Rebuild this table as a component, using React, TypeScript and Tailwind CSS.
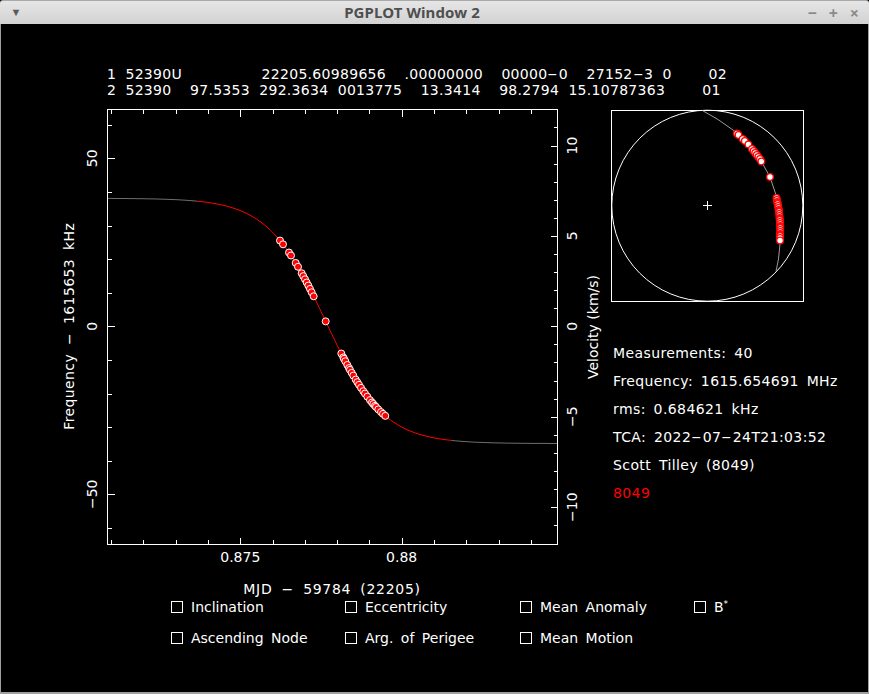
import React from "react"

const Y0 = 327.3
const fy = (v: number) => Y0 - 3.36 * v
const vy = (k: number) => Y0 - 18.08 * k
const tx = (k: number) => 240.3 + (k - 875) * 32.28
const curveV = (x: number) => 1.6 - 36.5 * Math.tanh((x - 325.5) / 58)

const range = (a: number, b: number, step = 1) => {
  const out: number[] = []
  for (let i = a; i <= b; i += step) out.push(i)
  return out
}

const pointXs = [
  280, 283, 289, 291, 295.7, 298, 301.7, 303.3, 305, 306.7, 308.3, 310, 311.7, 313.7, 325.7, 341.3, 343.3, 344,
  345.3, 347.3, 349, 350, 351.7, 353.3, 355.7, 357.3, 359, 361, 363.3, 365, 367.3, 370, 372, 373.3, 375, 376, 378.3,
  381, 383, 385.3,
]

const track: [number, number][] = [
  [702.7, 111.7], [718, 120.5], [734, 131.7], [748, 145], [760, 160], [770, 178], [776, 196], [779, 212],
  [780.3, 227], [780, 245], [778.5, 260], [776, 272.3],
]

const trackX = (y: number) => {
  for (let i = 0; i < track.length - 1; i++) {
    const [x1, y1] = track[i]
    const [x2, y2] = track[i + 1]
    if (y >= y1 && y <= y2) return x1 + ((x2 - x1) * (y - y1)) / (y2 - y1)
  }
  return track[track.length - 1][0]
}

const markerYs = [
  134.5, 136, 140, 142, 145.5, 150, 152, 154, 156, 158, 160, 162.5, 178, 199, 201, 203, 204, 205, 207, 209, 211, 212,
  213, 215, 217, 219, 220, 221, 223, 225, 227, 228, 229, 231, 233, 235, 236, 237, 239, 241.5,
]

function VText({
  x,
  y,
  children,
  spacing = 0,
}: {
  x: number
  y: number
  children: React.ReactNode
  spacing?: number
}) {
  return (
    <text
      x={x}
      y={y + 5.1}
      transform={`rotate(-90 ${x} ${y})`}
      textAnchor="middle"
      fill="white"
      fontSize={14}
      letterSpacing={spacing}
      wordSpacing={spacing ? 4 : 0}
    >
      {children}
    </text>
  )
}

function HText({ x, y, children, spacing = 0 }: { x: number; y: number; children: React.ReactNode; spacing?: number }) {
  return (
    <text
      x={x}
      y={y + 5.1}
      textAnchor="middle"
      fill="white"
      fontSize={14}
      letterSpacing={spacing}
      wordSpacing={spacing ? 4 : 0}
    >
      {children}
    </text>
  )
}

function curvePoints(a: number, b: number) {
  return range(a, b, 1)
    .map((x) => `${x},${fy(curveV(x)).toFixed(1)}`)
    .join(" ")
}

function DopplerPlot() {
  return (
    <svg width={550} height={498} viewBox="56 100 550 498" overflow="visible" className="shrink-0">
      <g stroke="white" strokeWidth={1} shapeRendering="crispEdges">
        <rect x={107.5} y={110.5} width={450} height={435} fill="none" />
        {range(-60, 60, 10).map((v) => {
          const y = Math.round(fy(v)) + 0.5
          return <line key={`l${v}`} x1={107.5} x2={107.5 + (v % 50 === 0 ? 7 : 4.5)} y1={y} y2={y} />
        })}
        {range(-11, 11).map((k) => {
          const y = Math.round(vy(k)) + 0.5
          return <line key={`r${k}`} x1={557.5} x2={557.5 - (k % 5 === 0 ? 7 : 3.5)} y1={y} y2={y} />
        })}
        {range(871, 884).map((k) => {
          const x = Math.round(tx(k)) + 0.5
          const len = k % 5 === 0 ? 7 : 4.5
          return (
            <g key={`t${k}`}>
              <line x1={x} x2={x} y1={545.5} y2={545.5 - len} />
              <line x1={x} x2={x} y1={110.5} y2={110.5 + len} />
            </g>
          )
        })}
      </g>

      <polyline points={curvePoints(108, 197)} fill="none" stroke="#6e6e6e" strokeWidth={1} />
      <polyline points={curvePoints(197, 452)} fill="none" stroke="#ff0000" strokeWidth={1} />
      <polyline points={curvePoints(452, 557)} fill="none" stroke="#6e6e6e" strokeWidth={1} />

      {pointXs.map((x, i) => (
        <circle key={i} cx={x} cy={fy(curveV(x))} r={3.5} fill="#ff0000" stroke="white" strokeWidth={1} />
      ))}

      <VText x={92} y={fy(50)}>50</VText>
      <VText x={92} y={fy(0)}>0</VText>
      <VText x={92} y={fy(-50)}>−50</VText>
      <VText x={69} y={Y0} spacing={0.4}>
        Frequency − 1615653 kHz
      </VText>

      <VText x={572} y={vy(10)}>10</VText>
      <VText x={572} y={vy(5)}>5</VText>
      <VText x={572} y={vy(0)}>0</VText>
      <VText x={572} y={vy(-5)}>−5</VText>
      <VText x={572} y={vy(-10)}>−10</VText>
      <VText x={592.5} y={328}>Velocity (km/s)</VText>

      <HText x={240.3} y={558.3}>0.875</HText>
      <HText x={401.7} y={558.3}>0.88</HText>
      <HText x={332} y={589.5} spacing={0.7}>
        MJD − 59784 (22205)
      </HText>
    </svg>
  )
}

function SkyPlot() {
  return (
    <svg width={193} height={193} viewBox="611 110 193 193" className="shrink-0">
      <rect x={611.5} y={111.5} width={191.5} height={190.5} fill="none" stroke="white" shapeRendering="crispEdges" />
      <circle cx={707.3} cy={206.7} r={95.5} fill="none" stroke="white" strokeWidth={1} />
      <g stroke="white" shapeRendering="crispEdges">
        <line x1={703} x2={712} y1={206.5} y2={206.5} />
        <line x1={707.5} x2={707.5} y1={202} y2={211} />
      </g>
      <polyline points={track.map(([x, y]) => `${x},${y}`).join(" ")} fill="none" stroke="#9a9a9a" strokeWidth={1} />
      {markerYs.map((y, i) => (
        <circle key={i} cx={trackX(y)} cy={y} r={3.3} fill="white" stroke="#ff0000" strokeWidth={1.3} />
      ))}
    </svg>
  )
}

const options = [
  "Inclination",
  "Eccentricity",
  "Mean Anomaly",
  "B*",
  "Ascending Node",
  "Arg. of Perigee",
  "Mean Motion",
]

function Option({ label }: { label: string }) {
  return (
    <div className="flex h-[20px] items-center gap-[8px]">
      <span className="h-[12px] w-[12px] border border-white" />
      {label === "B*" ? (
        <span>
          B<sup className="text-[9px]">*</sup>
        </span>
      ) : (
        <span>{label}</span>
      )}
    </div>
  )
}

// wide dash, like the plotter's hyphen
function Dash() {
  return <span className="mx-[3px] inline-block scale-x-[2.1]">-</span>
}

export default function App() {
  return (
    <div className="flex h-[694px] w-[869px] flex-col overflow-hidden bg-black font-['DejaVu_Sans',sans-serif] text-[14px] font-normal text-white">
      <div className="flex h-[24px] shrink-0 items-center rounded-t-[3px] border-t border-[#a9a9a9] bg-gradient-to-b from-[#e6e6e6] to-[#d2d2d2] font-['Noto_Sans',sans-serif]">
        <div className="flex w-[30px] justify-center pl-[2px] text-[11px] text-[#5a5a5a]">▼</div>
        <div className="flex-1 text-center text-[15px] font-bold tracking-[0.1px] text-[#4f4f4f]">PGPLOT Window 2</div>
        <div className="flex w-[75px] items-center justify-end gap-[12px] pr-[10px] text-[16px] font-bold text-[#8a8a8a]">
          <span>−</span>
          <span>+</span>
          <span>×</span>
        </div>
      </div>

      <div className="flex flex-1 flex-col border-x border-b-2 border-[#a0a0a0]">
        <div className="pl-[106px] pt-[42px] leading-[16px] tracking-[0.3px] whitespace-pre [word-spacing:4.5px]">
          <div>
            1 52390U<span className="[word-spacing:3.2px]">          </span>22205.60989656  .00000000  00000
            <Dash />0  27152
            <Dash />3 0    02
          </div>
          <div>2 52390  97.5353 292.3634 0013775  13.3414  98.2794 15.10787363    01</div>
        </div>

        <div className="mt-[1px] flex pl-[55px]">
          <DopplerPlot />
          <div className="ml-[5px] flex flex-col pt-[10px]">
            <SkyPlot />
            <div className="mt-[37px] pl-[2px] leading-[28px] tracking-[0.4px] [word-spacing:3px]">
              <div>Measurements: 40</div>
              <div>Frequency: 1615.654691 MHz</div>
              <div>rms: 0.684621 kHz</div>
              <div>
                TCA: 2022
                <Dash />07
                <Dash />24T21:03:52
              </div>
              <div>Scott Tilley (8049)</div>
              <div className="text-[#ff0000]">8049</div>
            </div>
          </div>
        </div>

        <div className="grid grid-cols-[174px_175px_174px_auto] gap-y-[11px] pl-[170px] [word-spacing:3px]">
          {options.map((o) => (
            <Option key={o} label={o} />
          ))}
        </div>
      </div>
    </div>
  )
}
